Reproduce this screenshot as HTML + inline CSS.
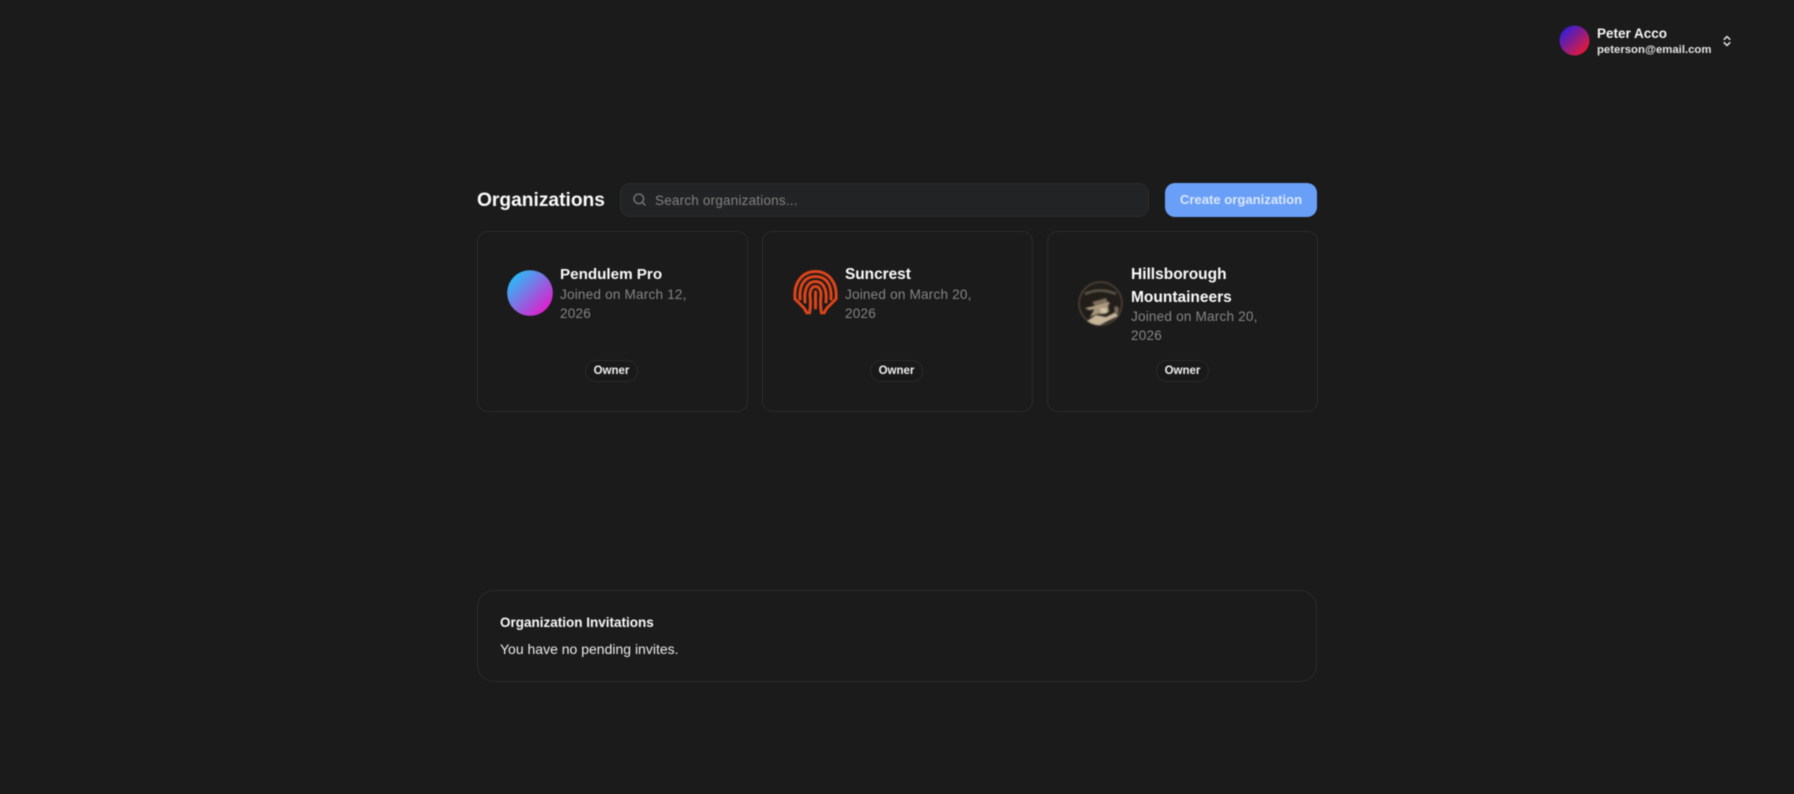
<!DOCTYPE html>
<html lang="en">
<head>
<meta charset="utf-8">
<title>Organizations</title>
<style>
html,body{margin:0;padding:0;background:#1b1b1b;}
body{width:1794px;height:794px;position:relative;overflow:hidden;font-family:"Liberation Sans",sans-serif;color:#f4f4f4;}
#w{position:absolute;left:0;top:0;width:1794px;height:794px;filter:blur(.4px);}
.a{position:absolute;white-space:nowrap;}
.card{position:absolute;top:231px;width:269px;height:179px;border:1px solid #2c2c2c;border-radius:11px;}
.name{font-weight:700;font-size:15.2px;line-height:20px;color:#fafafa;}
.join{font-size:13.6px;line-height:19px;color:#858585;letter-spacing:.18px;}
.badge{position:absolute;top:360px;width:51px;height:20px;border:1px solid #2b2b2b;border-radius:11px;background:#191919;font-weight:700;font-size:11.5px;line-height:20px;text-align:center;color:#f0f0f0;}
</style>
</head>
<body>
<div id="w">
<svg class="a" style="left:1559px;top:25px" width="31" height="31" viewBox="0 0 31 31"><defs><linearGradient id="g1" x1="0" y1="0" x2="1" y2="1"><stop offset=".15" stop-color="#3a1fd0"/><stop offset=".85" stop-color="#e21a3c"/></linearGradient></defs><circle cx="15.5" cy="15.5" r="15" fill="url(#g1)"/></svg>
<div class="a" style="left:1597px;top:25px;font-weight:700;font-size:13.5px;line-height:17px;color:#f5f5f5">Peter Acco</div>
<div class="a" style="left:1597px;top:42px;font-weight:700;font-size:11.35px;line-height:16px;color:#e4e4e4">peterson@email.com</div>
<svg class="a" style="left:1720px;top:33px" width="14" height="16" viewBox="0 0 14 16" fill="none" stroke="#e6e6e6" stroke-width="1.5" stroke-linecap="round" stroke-linejoin="round"><path d="M4.200 6.300L7 3.500l2.800 2.800M4.200 9.700L7 12.500l2.800-2.800"/></svg>

<div class="a" style="left:477px;top:188px;font-weight:700;font-size:19.2px;line-height:26px;color:#fafafa">Organizations</div>
<div class="a" style="left:620px;top:183px;width:527px;height:32px;border:1px solid #2c2c2c;border-radius:10px;background:#222324"></div>
<svg class="a" style="left:632px;top:192px" width="15" height="15" viewBox="0 0 15 15" fill="none" stroke="#7c7c7c" stroke-width="1.3" stroke-linecap="round"><circle cx="6.800" cy="6.800" r="4.800"/><path d="M10.300 10.300l2.700 2.700"/></svg>
<div class="a" style="left:655px;top:192px;font-size:13.5px;line-height:18px;color:#808080;letter-spacing:.2px">Search organizations...</div>
<div class="a" style="left:1165px;top:183px;width:152px;height:34px;border-radius:10px;background:#699ff7;color:#dbe7fc;font-weight:700;font-size:13.1px;line-height:33px;text-align:center">Create organization</div>

<div class="card" style="left:477px"></div>
<div class="card" style="left:762px"></div>
<div class="card" style="left:1047px"></div>

<svg class="a" style="left:507px;top:270px" width="46" height="46" viewBox="0 0 46 46"><defs><linearGradient id="g2" x1="0" y1="0" x2="1" y2="1"><stop offset=".15" stop-color="#2fb6f6"/><stop offset=".85" stop-color="#db22cf"/></linearGradient></defs><circle cx="23" cy="23" r="22.800" fill="url(#g2)"/></svg>
<div class="a name" style="left:560px;top:265px">Pendulem Pro</div>
<div class="a join" style="left:560px;top:285px">Joined on March 12,<br>2026</div>
<div class="badge" style="left:585px">Owner</div>

<svg class="a" style="left:793px;top:270px" width="45" height="46" viewBox="0 0 45 46" fill="none" stroke="#dc451a" stroke-width="3" stroke-linecap="round" stroke-linejoin="round">
<path d="M2 28C.5 12 10 1.500 22.500 1.500S44.500 12 43 28"/>
<path d="M7 29C6 13 13 6.500 22.500 6.500S39 13 38 29"/>
<path d="M12 32C10.500 17 16 11.500 22.500 11.500S34.500 17 33 32"/>
<path d="M16.500 43C18 36 17.500 30 17 25C17 20 19 16.500 22.500 16.500S28 20 28 25C27.500 30 27 36 28.500 43"/>
<path d="M22.500 22V38"/>
<path d="M2 29L11 38M43 29L34 38M11 38L14 43M34 38L31 43"/>
</svg>
<div class="a name" style="left:845px;top:265px;font-size:15.4px">Suncrest</div>
<div class="a join" style="left:845px;top:285px">Joined on March 20,<br>2026</div>
<div class="badge" style="left:870px">Owner</div>

<svg class="a" style="left:1078px;top:281px;filter:blur(.7px)" width="45" height="45" viewBox="0 0 45 45">
<defs><clipPath id="c"><circle cx="22.500" cy="22.500" r="22"/></clipPath></defs>
<circle cx="22.500" cy="22.500" r="21.500" fill="#211d19" stroke="#5c5145" stroke-width="1.200"/>
<g clip-path="url(#c)">
<path d="M7 13Q22 6 38 13" fill="none" stroke="#5f564a" stroke-width="2.500"/>
<path d="M14 21L28 17 30 22 17 25Z" fill="#7d6f5c"/>
<path d="M7 27Q18 25 31 21L32 23Q20 28 11 29Z" fill="#b5a287"/>
<path d="M17 27L30 23 31 31 27 33 19 33 12 36Z" fill="#a8967c"/>
<path d="M22 27h7v5h-6z" fill="#d2c1a6"/>
<path d="M9 40L18 34 28 36 38 31 40 35 30 40 20 45 8 45Z" fill="#c7b59a"/>
<path d="M36 26l3-1 2 3-1 4-3 1z" fill="#7a6b58"/>
</g>
</svg>
<div class="a name" style="left:1131px;top:263px;line-height:23px;font-size:15.5px">Hillsborough<br>Mountaineers</div>
<div class="a join" style="left:1131px;top:307px">Joined on March 20,<br>2026</div>
<div class="badge" style="left:1156px">Owner</div>

<div class="a" style="left:477px;top:590px;width:838px;height:90px;border:1px solid #2c2c2c;border-radius:17px"></div>
<div class="a" style="left:500px;top:614px;font-weight:700;font-size:13.5px;line-height:18px;color:#f8f8f8">Organization Invitations</div>
<div class="a" style="left:500px;top:640px;font-size:14px;line-height:19px;color:#ececec">You have no pending invites.</div>
</div>
</body>
</html>
